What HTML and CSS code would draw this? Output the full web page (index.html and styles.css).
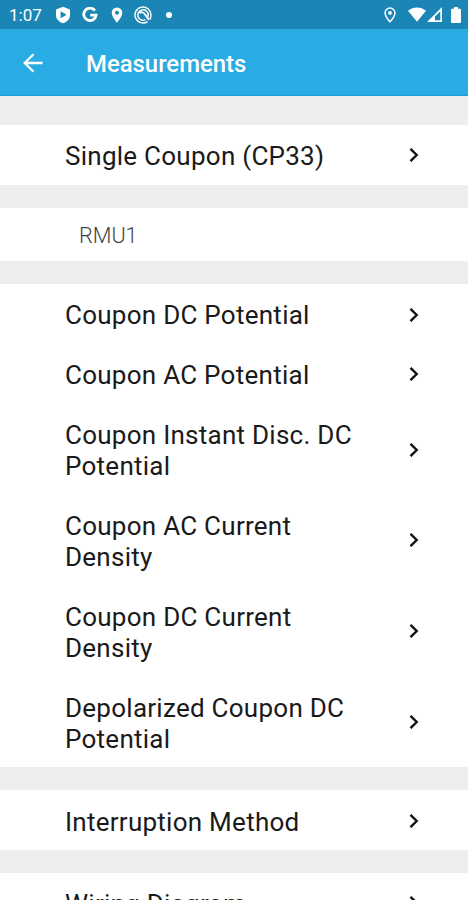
FILE: index.html
```
<!DOCTYPE html>
<html lang="en">
<head>
    <meta charset="UTF-8">
    <meta name="viewport" content="width=device-width, initial-scale=1.0">
    <title>Measurements</title>
    <link rel="stylesheet" href="styles.css">
</head>
<body>
    <div class="status-bar">
        <span class="time">1:07</span>
        <svg class="icon-shield" width="16" height="18" viewBox="0 0 16 18">
            <path fill="#fff" fill-rule="evenodd" d="M8 .7 15 3.400V9c0 4-2.800 6.700-7 8.300C3.800 15.700 1 13 1 9V3.400zM5.600 5.300v7l6-3.500z"/>
        </svg>
        <svg class="icon-google" width="16" height="16" viewBox="0 0 16 16">
            <path fill="none" stroke="#fff" stroke-width="2.800" d="M12.900 3.600A6.200 6.200 0 1 0 14.100 8.100H8.200"/>
        </svg>
        <svg class="icon-pin" width="12" height="16" viewBox="0 0 12 16">
            <path fill="#fff" fill-rule="evenodd" d="M6 .4a5.300 5.300 0 0 0-5.300 5.300C.7 9.700 6 15.600 6 15.600s5.300-5.900 5.300-9.900A5.300 5.300 0 0 0 6 .4zm0 3.400a2 2 0 1 1 0 4 2 2 0 0 1 0-4z"/>
        </svg>
        <svg class="icon-radar" width="18" height="18" viewBox="0 0 18 18" fill="none" stroke="#fff">
            <path stroke-width="1.400" d="M13.500 15.600A8 8 0 1 1 17 9.200c0 2-.6 3.400-1.400 4.500"/>
            <path stroke-width="1.500" d="M11.500 13.600A5.200 5.200 0 1 1 14.200 9c0 .8-.1 1.400-.4 2"/>
            <path stroke-width="1.800" d="M5.500 7.200c2-1.700 4-1 5 .6l4.300 6"/>
        </svg>
        <span class="dot"></span>
        <span class="spacer"></span>
        <svg class="icon-location" width="12" height="16" viewBox="0 0 12 16">
            <path fill="none" stroke="#fff" stroke-width="1.500" d="M6 1a4.900 4.900 0 0 0-4.900 4.900C1.100 9.400 6 14.700 6 14.700s4.900-5.300 4.900-8.800A4.900 4.900 0 0 0 6 1z"/>
            <circle cx="6" cy="5.900" r="1.900" fill="#fff"/>
        </svg>
        <svg class="icon-wifi" width="18" height="15" viewBox="0 0 18 15">
            <path fill="#fff" d="M0 3.800C5.200-.7 12.800-.7 18 3.800L9 14.700z"/>
        </svg>
        <svg class="icon-signal" width="15" height="15" viewBox="0 0 15 15">
            <path fill="#fff" fill-rule="evenodd" d="M15 0v15H0zM13.300 4.200 8 9.500v3.700h5.300z"/>
        </svg>
        <svg class="icon-battery" width="10" height="16" viewBox="0 0 10 16">
            <path fill="#fff" d="M3 0h4v1.700h1.700c.8 0 1.300.5 1.300 1.300v11.700c0 .8-.5 1.300-1.300 1.300H1.300C.5 16 0 15.500 0 14.700V3c0-.8.500-1.300 1.300-1.300H3z"/>
        </svg>
    </div>

    <header class="app-bar">
        <svg class="back" width="20" height="20" viewBox="0 0 20 20">
            <path fill="none" stroke="#fff" stroke-width="2.300" d="M19.500 10H2M10.500 1.200 1.700 10l8.800 8.800"/>
        </svg>
        <h1>Measurements</h1>
    </header>

    <main class="list">
        <section class="group">
            <div class="row">
                <span class="label">Single Coupon (CP33)</span>
                <svg class="chevron" viewBox="0 0 10 16"><path d="M1.500 1.800 7.700 8l-6.200 6.200"/></svg>
            </div>
        </section>

        <section class="group unit">RMU1</section>

        <section class="group">
            <div class="row">
                <span class="label">Coupon DC Potential</span>
                <svg class="chevron" viewBox="0 0 10 16"><path d="M1.500 1.800 7.700 8l-6.200 6.200"/></svg>
            </div>
            <div class="row">
                <span class="label">Coupon AC Potential</span>
                <svg class="chevron" viewBox="0 0 10 16"><path d="M1.500 1.800 7.700 8l-6.200 6.200"/></svg>
            </div>
            <div class="row">
                <span class="label">Coupon Instant Disc. DC Potential</span>
                <svg class="chevron" viewBox="0 0 10 16"><path d="M1.500 1.800 7.700 8l-6.200 6.200"/></svg>
            </div>
            <div class="row">
                <span class="label">Coupon AC Current Density</span>
                <svg class="chevron" viewBox="0 0 10 16"><path d="M1.500 1.800 7.700 8l-6.200 6.200"/></svg>
            </div>
            <div class="row">
                <span class="label">Coupon DC Current Density</span>
                <svg class="chevron" viewBox="0 0 10 16"><path d="M1.500 1.800 7.700 8l-6.200 6.200"/></svg>
            </div>
            <div class="row">
                <span class="label">Depolarized Coupon DC Potential</span>
                <svg class="chevron" viewBox="0 0 10 16"><path d="M1.500 1.800 7.700 8l-6.200 6.200"/></svg>
            </div>
        </section>

        <section class="group">
            <div class="row">
                <span class="label">Interruption Method</span>
                <svg class="chevron" viewBox="0 0 10 16"><path d="M1.500 1.800 7.700 8l-6.200 6.200"/></svg>
            </div>
        </section>

        <section class="group">
            <div class="row">
                <span class="label">Wiring Diagram</span>
                <svg class="chevron" viewBox="0 0 10 16"><path d="M1.500 1.800 7.700 8l-6.200 6.200"/></svg>
            </div>
        </section>
    </main>
</body>
</html>
```

FILE: styles.css
```
* {
    box-sizing: border-box;
}

body {
    font-family: Roboto, sans-serif;
    background: #eeeeee;
    color: #1a1a1a;
    margin: 0;
    height: 100vh;
    overflow: hidden;
    display: flex;
    flex-direction: column;
}

svg {
    display: block;
    flex-shrink: 0;
}

.status-bar {
    height: 28.5px;
    flex-shrink: 0;
    background: #1b86b6;
    color: #fff;
    display: flex;
    align-items: center;
    padding: 1px 7px 0 9px;
}

.time {
    width: 46px;
    font-size: 17px;
    line-height: 20px;
}

.icon-google {
    margin-left: 11px;
}

.icon-pin {
    margin-left: 13px;
}

.icon-radar {
    margin-left: 11px;
}

.dot {
    width: 6px;
    height: 6px;
    margin-left: 14px;
    border-radius: 50%;
    background: #fff;
}

.spacer {
    flex: 1;
}

.icon-wifi {
    margin-left: 12px;
}

.icon-signal {
    margin-left: 1px;
}

.icon-battery {
    margin-left: 9px;
}

.app-bar {
    height: 67.5px;
    flex-shrink: 0;
    background: #29abe4;
    border-bottom: 1px solid #1a9fd8;
    color: #fff;
    display: flex;
    align-items: center;
    padding: 2px 23px 0;
}

.app-bar h1 {
    margin: 3px 0 0 43px;
    font-size: 23.9px;
    font-weight: 500;
}

.list {
    padding-top: 29px;
    display: flex;
    flex-direction: column;
    gap: 23px;
}

.group {
    flex-shrink: 0;
    background: #fff;
}

.row {
    display: flex;
    align-items: center;
    justify-content: space-between;
    padding: 16.2px 49px 12.2px 65px;
}

.label {
    width: 300px;
    font-size: 26px;
    line-height: 31.3px;
    letter-spacing: 0.26px;
}

.chevron {
    width: 10px;
    height: 16px;
    margin-bottom: 3px;
    fill: none;
    stroke: #111;
    stroke-width: 2.4;
}

.unit {
    height: 53.5px;
    padding-left: 79px;
    font-size: 21.6px;
    font-weight: 300;
    line-height: 56px;
    color: #444;
}
```
